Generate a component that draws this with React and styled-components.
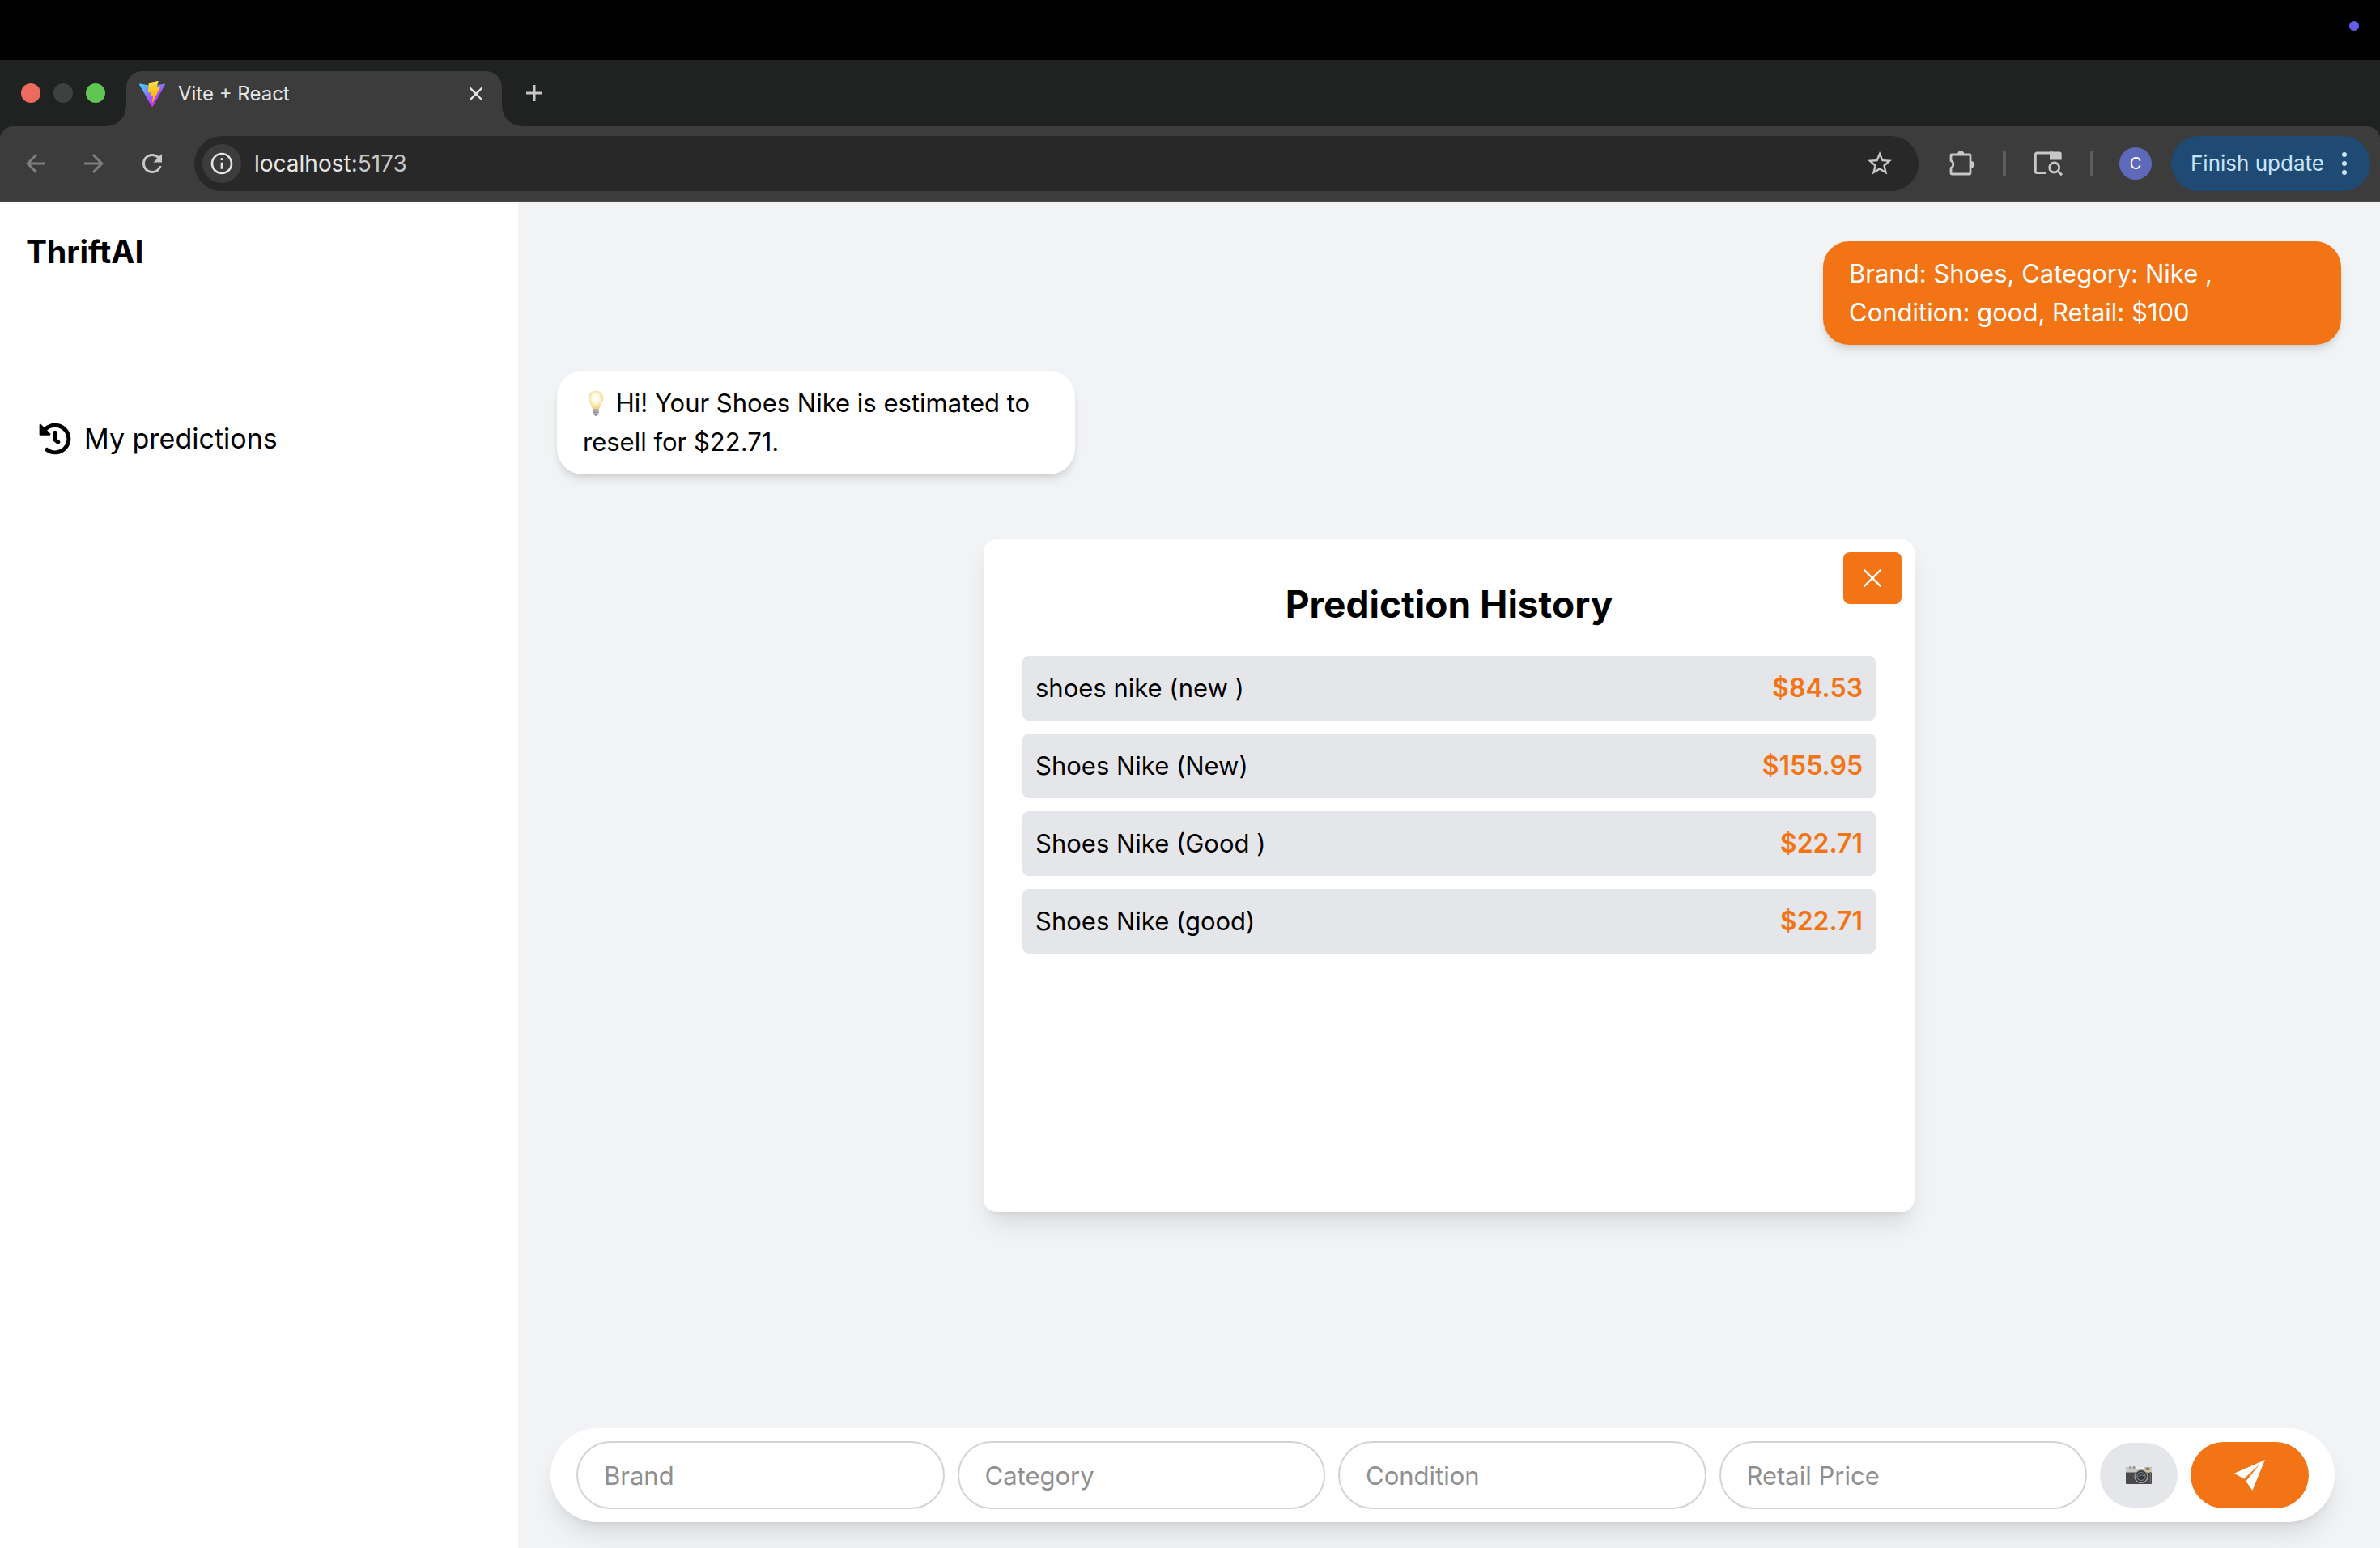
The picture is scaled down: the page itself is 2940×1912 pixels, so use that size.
import React from "react";
import styled, { createGlobalStyle, css } from "styled-components";
import { FaHistory } from "react-icons/fa";
import {
  MdArrowBack,
  MdArrowForward,
  MdInfoOutline,
  MdRefresh,
  MdStarBorder,
} from "react-icons/md";

const colors = {
  orange: "#f27415",
  page: "#f2f3f5",
  row: "#e5e6ea",
  strip: "#202221",
  toolbar: "#3c3c3c",
  icon: "#c7c7c7",
};

const GlobalStyle = createGlobalStyle`
  *, *::before, *::after { box-sizing: border-box; }
  body {
    margin: 0;
    background: #000;
    color: #000;
    font-family: Inter, "Liberation Sans", sans-serif;
  }
  button, input { font: inherit; color: inherit; }
  button { border: 0; padding: 0; background: none; cursor: pointer; }
  h1, h2, p, ul { margin: 0; padding: 0; }
  svg { display: block; flex: none; }
`;

const Screen = styled.div`
  display: flex;
  flex-direction: column;
  min-height: 100vh;
`;

const MenuBar = styled.div`
  display: flex;
  justify-content: flex-end;
  align-items: flex-start;
  height: 74px;
  padding: 26px 26px 0 0;
`;

const RecordingDot = styled.span`
  width: 12px;
  height: 12px;
  border-radius: 50%;
  background: #635ee8;
`;

const TabStrip = styled.div`
  display: flex;
  align-items: center;
  height: 82px;
  padding-left: 26px;
  background: ${colors.strip};
`;

const WindowControls = styled.div`
  display: flex;
  gap: 16px;
  margin-right: 26px;
`;

const WindowButton = styled.button`
  width: 24px;
  height: 24px;
  border-radius: 50%;
  background: ${(p) => p.$color};
`;

const Tab = styled.div`
  position: relative;
  align-self: flex-end;
  display: flex;
  align-items: center;
  gap: 16px;
  width: 464px;
  height: 68px;
  padding: 0 24px 12px 16px;
  border-radius: 20px 20px 0 0;
  background: ${colors.toolbar};

  &::before,
  &::after {
    content: "";
    position: absolute;
    bottom: 0;
    width: 24px;
    height: 24px;
  }
  &::before {
    right: 100%;
    background: radial-gradient(circle at 0 0, transparent 23px, ${colors.toolbar} 24px);
  }
  &::after {
    left: 100%;
    background: radial-gradient(circle at 100% 0, transparent 23px, ${colors.toolbar} 24px);
  }
`;

const TabTitle = styled.span`
  flex: 1;
  font-size: 24px;
  line-height: 32px;
  color: #e6e6e6;
`;

const TabCloseButton = styled.button`
  color: #e3e3e3;
`;

const NewTabButton = styled.button`
  margin-left: 28px;
  color: ${colors.icon};
`;

const ToolbarBack = styled.div`
  background: ${colors.strip};
`;

const Toolbar = styled.div`
  display: flex;
  align-items: center;
  gap: 28px;
  padding: 12px 12px 12px 20px;
  border-bottom: 2px solid #494949;
  border-radius: 16px 16px 0 0;
  background: ${colors.toolbar};
`;

const NavButtons = styled.div`
  display: flex;
  gap: 24px;
`;

const ToolButton = styled.button`
  display: grid;
  place-items: center;
  width: 48px;
  height: 48px;
  border-radius: 50%;
  color: ${(p) => (p.$dim ? "#7e7e7e" : colors.icon)};
  ${(p) =>
    p.$filled &&
    css`
      background: ${colors.toolbar};
      color: #e3e3e3;
    `}
`;

const AddressBar = styled.div`
  flex: 1;
  display: flex;
  align-items: center;
  gap: 16px;
  height: 68px;
  padding: 0 24px 0 10px;
  border-radius: 34px;
  background: #282828;
`;

const Address = styled.span`
  flex: 1;
  font-size: 28px;
  line-height: 36px;
  color: #c7c7c7;

  b {
    font-weight: 400;
    color: #e6e6e6;
  }
`;

const Separator = styled.span`
  width: 4px;
  height: 32px;
  border-radius: 2px;
  background: #5e5e5e;
`;

const Account = styled.div`
  display: flex;
  align-items: center;
  gap: 24px;
  padding-left: 4px;
`;

const Avatar = styled.button`
  width: 40px;
  height: 40px;
  border-radius: 50%;
  background: #5f69ba;
  color: #fff;
  font-size: 20px;
  line-height: 40px;
`;

const UpdateButton = styled.button`
  display: flex;
  align-items: center;
  justify-content: space-between;
  width: 246px;
  height: 68px;
  padding: 0 28px 0 24px;
  border-radius: 34px;
  background: #1f4a73;
  color: #c8e4fb;
  font-size: 26px;
  line-height: 36px;
  white-space: nowrap;
`;

const AppShell = styled.div`
  flex: 1;
  display: flex;
  background: ${colors.page};
`;

const Sidebar = styled.aside`
  display: flex;
  flex-direction: column;
  align-items: flex-start;
  gap: 176px;
  flex: none;
  width: 640px;
  padding: 32px;
  background: #fff;
`;

const Brand = styled.h1`
  font-size: 39px;
  line-height: 58px;
  font-weight: 700;
`;

const HistoryButton = styled.button`
  display: flex;
  align-items: center;
  gap: 16px;
  padding: 0 16px;
  font-size: 34px;
  line-height: 52px;
`;

const Main = styled.main`
  position: relative;
  flex: 1;
  min-width: 0;
  display: flex;
  flex-direction: column;
`;

const Messages = styled.div`
  flex: 1;
  display: flex;
  flex-direction: column;
  gap: 32px;
  padding: 48px;
`;

const Bubble = styled.p`
  align-self: ${(p) => (p.$mine ? "flex-end" : "flex-start")};
  width: 640px;
  padding: 16px 32px;
  border-radius: 32px;
  background: ${(p) => (p.$mine ? colors.orange : "#fff")};
  color: ${(p) => (p.$mine ? "#fff" : "#000")};
  font-size: 31px;
  line-height: 48px;
  box-shadow: 0 8px 12px -2px rgba(0, 0, 0, 0.1), 0 4px 8px -4px rgba(0, 0, 0, 0.1);
`;

const InlineEmoji = styled.svg`
  display: inline-block;
  vertical-align: -5px;
`;

const cardShadow = css`
  box-shadow: 0 20px 30px -6px rgba(0, 0, 0, 0.1), 0 8px 12px -8px rgba(0, 0, 0, 0.1);
`;

const Modal = styled.section`
  position: absolute;
  inset: 25%;
  padding: 48px;
  border-radius: 16px;
  background: #fff;
  ${cardShadow}
`;

const ModalTitle = styled.h2`
  margin-bottom: 32px;
  font-size: 46px;
  line-height: 64px;
  font-weight: 700;
  text-align: center;
`;

const CloseButton = styled.button`
  position: absolute;
  top: 16px;
  right: 16px;
  display: grid;
  place-items: center;
  width: 72px;
  height: 64px;
  border-radius: 8px;
  background: ${colors.orange};
  color: #fff;
`;

const HistoryList = styled.ul`
  display: flex;
  flex-direction: column;
  gap: 16px;
  list-style: none;
`;

const HistoryRow = styled.li`
  display: flex;
  justify-content: space-between;
  padding: 16px;
  border-radius: 8px;
  background: ${colors.row};
  font-size: 31px;
  line-height: 48px;
`;

const Price = styled.span`
  color: ${colors.orange};
  font-size: 32px;
  font-weight: 600;
`;

const Composer = styled.form`
  display: flex;
  align-items: center;
  gap: 16px;
  margin: 0 56px 32px 40px;
  padding: 16px 32px;
  border-radius: 58px;
  background: #fff;
  ${cardShadow}
`;

const Field = styled.input`
  flex: 1;
  min-width: 0;
  height: 84px;
  padding: 0 32px;
  border: 2px solid #d6d3d1;
  border-radius: 42px;
  background: #fff;
  font-size: 31px;
  outline: none;

  &::placeholder {
    color: #8f8f8f;
    opacity: 1;
  }
`;

const RoundButton = styled.button`
  display: grid;
  place-items: center;
  width: ${(p) => (p.$primary ? 146 : 96)}px;
  height: ${(p) => (p.$primary ? 82 : 80)}px;
  border-radius: 41px;
  background: ${(p) => (p.$primary ? colors.orange : colors.row)};
  color: #fff;
`;

const ViteLogo = () => (
  <svg width="32" height="32" viewBox="0 0 256 257" aria-hidden="true">
    <defs>
      <linearGradient id="viteBody" x1="-.828%" x2="57.636%" y1="7.652%" y2="78.411%">
        <stop offset="0%" stopColor="#41D1FF" />
        <stop offset="100%" stopColor="#BD34FE" />
      </linearGradient>
      <linearGradient id="viteBolt" x1="43.376%" x2="50.316%" y1="2.242%" y2="89.03%">
        <stop offset="0%" stopColor="#FFEA83" />
        <stop offset="8.333%" stopColor="#FFDD35" />
        <stop offset="100%" stopColor="#FFA800" />
      </linearGradient>
    </defs>
    <path
      fill="url(#viteBody)"
      d="M255.153 37.938L134.897 252.976c-2.483 4.44-8.862 4.466-11.382.048L.875 37.958c-2.746-4.814 1.371-10.646 6.827-9.67l120.385 21.517a6.537 6.537 0 0 0 2.322-.004l117.867-21.483c5.438-.991 9.574 4.796 6.877 9.62Z"
    />
    <path
      fill="url(#viteBolt)"
      d="M185.432.063L96.44 17.501a3.268 3.268 0 0 0-2.634 3.014l-5.474 92.456a3.268 3.268 0 0 0 3.997 3.378l24.777-5.718c2.318-.535 4.413 1.507 3.936 3.838l-7.361 36.047c-.495 2.426 1.782 4.5 4.151 3.78l15.304-4.649c2.372-.72 4.652 1.36 4.15 3.788l-11.698 56.621c-.732 3.542 3.979 5.473 5.943 2.437l1.313-2.028l72.516-144.72c1.215-2.423-.88-5.186-3.54-4.672l-25.505 4.922c-2.396.462-4.435-1.77-3.759-4.114l16.646-57.705c.677-2.35-1.37-4.583-3.769-4.113Z"
    />
  </svg>
);

const Cross = ({ size, weight }) => (
  <svg width={size} height={size} viewBox="0 0 20 20" aria-hidden="true">
    <path d="M1 1 19 19M19 1 1 19" stroke="currentColor" strokeWidth={weight} strokeLinecap="round" />
  </svg>
);

const PlusIcon = () => (
  <svg width="24" height="24" viewBox="0 0 24 24" aria-hidden="true">
    <path d="M12 2v20M2 12h20" stroke="currentColor" strokeWidth="3" />
  </svg>
);

const PuzzleIcon = () => (
  <svg width="36" height="36" viewBox="0 0 36 36" aria-hidden="true">
    <path
      d="M7 7h22a1 1 0 0 1 1 1v22a1 1 0 0 1-1 1H7a1 1 0 0 1-1-1v-6.500a5 5 0 0 0 0-9V8a1 1 0 0 1 1-1Z"
      fill="none"
      stroke="currentColor"
      strokeWidth="2.800"
      strokeLinejoin="round"
    />
    <path d="M14 6.500a4.200 4.200 0 0 1 8.400 0ZM31 15a4.200 4.200 0 0 1 0 8.400Z" fill="currentColor" />
  </svg>
);

const TabSearchIcon = () => (
  <svg width="36" height="32" viewBox="0 0 36 32" aria-hidden="true">
    <path d="M15 27.500H4a1.600 1.600 0 0 1-1.600-1.600V4.600A1.600 1.600 0 0 1 4 3h20" fill="none" stroke="currentColor" strokeWidth="2.800" />
    <path d="M20 1.600h12.500A2.200 2.200 0 0 1 34.700 3.800V11.600H20Z" fill="currentColor" />
    <circle cx="25.700" cy="21" r="6" fill="none" stroke="currentColor" strokeWidth="2.800" />
    <path d="M30 25.200l5 5" stroke="currentColor" strokeWidth="3" />
  </svg>
);

const KebabIcon = () => (
  <svg width="8" height="28" viewBox="0 0 8 28" fill="currentColor" aria-hidden="true">
    <circle cx="4" cy="3" r="3" />
    <circle cx="4" cy="14" r="3" />
    <circle cx="4" cy="25" r="3" />
  </svg>
);

const BulbEmoji = () => (
  <InlineEmoji width="32" height="32" viewBox="0 0 32 32" role="img" aria-label="light bulb">
    <defs>
      <radialGradient id="bulbGlass" cx="50%" cy="42%" r="58%">
        <stop offset="0%" stopColor="#ffffff" />
        <stop offset="45%" stopColor="#fdf8df" />
        <stop offset="100%" stopColor="#ecd077" />
      </radialGradient>
    </defs>
    <path
      d="M16 0.500C10.500 0.500 6.800 4.700 6.800 10c0 3.200 1.500 5.200 2.800 7.600 1.200 2.200 1.500 4.900 3 5.600h6.800c1.500-.7 1.800-3.400 3-5.600 1.300-2.400 2.800-4.400 2.800-7.600C25.200 4.700 21.500.5 16 .5Z"
      fill="url(#bulbGlass)"
    />
    <path d="M12.400 23h7.200v5.400l-1.400 1.400h-4.400l-1.400-1.400Z" fill="#b9b9b9" />
    <path d="M12.400 25.200l7.200-.6M12.400 27.600l7.200-.6" stroke="#7d7d7d" strokeWidth="0.900" />
    <path d="M14 29.600h4l-1 1.800h-2Z" fill="#4d4d4d" />
  </InlineEmoji>
);

const CameraEmoji = () => (
  <svg width="32" height="22" viewBox="0 0 32 22" aria-hidden="true">
    <rect y="1" width="32" height="21" rx="1" fill="#4a4a4a" />
    <path d="M0 1.500Q0 1 1 1H31Q32 1 32 1.500V7.500H0Z" fill="#c9c9c7" />
    <rect x="4" width="3" height="3" rx="1" fill="#9a9a9a" />
    <rect x="8.500" width="3" height="3" rx="1" fill="#9a9a9a" />
    <rect x="13" y="1" width="9" height="2" fill="#f1efe6" />
    <rect x="24.500" y="1.500" width="5" height="3.500" fill="#8d8570" />
    <rect x="26.500" y="5.500" width="3" height="2" fill="#f2c230" />
    <path d="M1.500 7.500V21M30.500 7.500V21" stroke="#6b6b6b" />
    <circle cx="19" cy="12.500" r="8.600" fill="#a9a9a9" />
    <circle cx="19" cy="12.500" r="7.400" fill="#3d3f40" />
    <circle cx="19" cy="12.500" r="5.600" fill="#7b8082" />
    <circle cx="19" cy="12.500" r="4.400" fill="#33383a" />
    <path d="M15.500 12.500q3.500-2.500 7-1" stroke="#80898c" fill="none" />
  </svg>
);

const SendIcon = () => (
  <svg width="38" height="38" viewBox="0 0 38 38" fill="currentColor" aria-hidden="true">
    <path d="M38 0 0 16.700 12 23.400 31.500 5.300 14.400 26.400 22.400 38Z" />
  </svg>
);

const fields = [
  { id: "brand", label: "Brand" },
  { id: "category", label: "Category" },
  { id: "condition", label: "Condition" },
  { id: "retail", label: "Retail Price" },
];

const predictions = [
  { item: "shoes nike (new )", price: "$84.53" },
  { item: "Shoes Nike (New)", price: "$155.95" },
  { item: "Shoes Nike (Good )", price: "$22.71" },
  { item: "Shoes Nike (good)", price: "$22.71" },
];

function BrowserChrome() {
  return (
    <header>
      <MenuBar>
        <RecordingDot />
      </MenuBar>
      <TabStrip>
        <WindowControls>
          <WindowButton $color="#ed6a5e" aria-label="Close window" />
          <WindowButton $color="#3f4040" aria-label="Minimize window" />
          <WindowButton $color="#61c554" aria-label="Zoom window" />
        </WindowControls>
        <Tab>
          <ViteLogo />
          <TabTitle>Vite + React</TabTitle>
          <TabCloseButton aria-label="Close tab">
            <Cross size={16} weight={3} />
          </TabCloseButton>
        </Tab>
        <NewTabButton aria-label="New tab">
          <PlusIcon />
        </NewTabButton>
      </TabStrip>
      <ToolbarBack>
        <Toolbar>
          <NavButtons>
            <ToolButton $dim aria-label="Back">
              <MdArrowBack size={36} />
            </ToolButton>
            <ToolButton $dim aria-label="Forward">
              <MdArrowForward size={36} />
            </ToolButton>
            <ToolButton aria-label="Reload">
              <MdRefresh size={36} />
            </ToolButton>
          </NavButtons>
          <AddressBar>
            <ToolButton $filled aria-label="Site information">
              <MdInfoOutline size={32} />
            </ToolButton>
            <Address>
              <b>localhost</b>:5173
            </Address>
            <ToolButton aria-label="Bookmark">
              <MdStarBorder size={36} />
            </ToolButton>
          </AddressBar>
          <ToolButton aria-label="Extensions">
            <PuzzleIcon />
          </ToolButton>
          <Separator />
          <ToolButton aria-label="Search tabs">
            <TabSearchIcon />
          </ToolButton>
          <Separator />
          <Account>
            <Avatar aria-label="Profile C">C</Avatar>
            <UpdateButton>
              Finish update
              <KebabIcon />
            </UpdateButton>
          </Account>
        </Toolbar>
      </ToolbarBack>
    </header>
  );
}

export default function App() {
  return (
    <Screen>
      <GlobalStyle />
      <BrowserChrome />
      <AppShell>
        <Sidebar>
          <Brand>ThriftAI</Brand>
          <HistoryButton>
            <FaHistory size={40} />
            My predictions
          </HistoryButton>
        </Sidebar>
        <Main>
          <Messages>
            <Bubble $mine>Brand: Shoes, Category: Nike , Condition: good, Retail: $100</Bubble>
            <Bubble>
              <BulbEmoji /> Hi! Your Shoes Nike is estimated to resell for $22.71.
            </Bubble>
          </Messages>
          <Composer onSubmit={(e) => e.preventDefault()}>
            {fields.map((f) => (
              <Field key={f.id} id={f.id} aria-label={f.label} placeholder={f.label} />
            ))}
            <RoundButton type="button" aria-label="Add photo">
              <CameraEmoji />
            </RoundButton>
            <RoundButton type="submit" $primary aria-label="Send">
              <SendIcon />
            </RoundButton>
          </Composer>
          <Modal role="dialog" aria-labelledby="history-title">
            <ModalTitle id="history-title">Prediction History</ModalTitle>
            <CloseButton aria-label="Close">
              <Cross size={22} weight={2} />
            </CloseButton>
            <HistoryList>
              {predictions.map((p) => (
                <HistoryRow key={p.item}>
                  <span>{p.item}</span>
                  <Price>{p.price}</Price>
                </HistoryRow>
              ))}
            </HistoryList>
          </Modal>
        </Main>
      </AppShell>
    </Screen>
  );
}
